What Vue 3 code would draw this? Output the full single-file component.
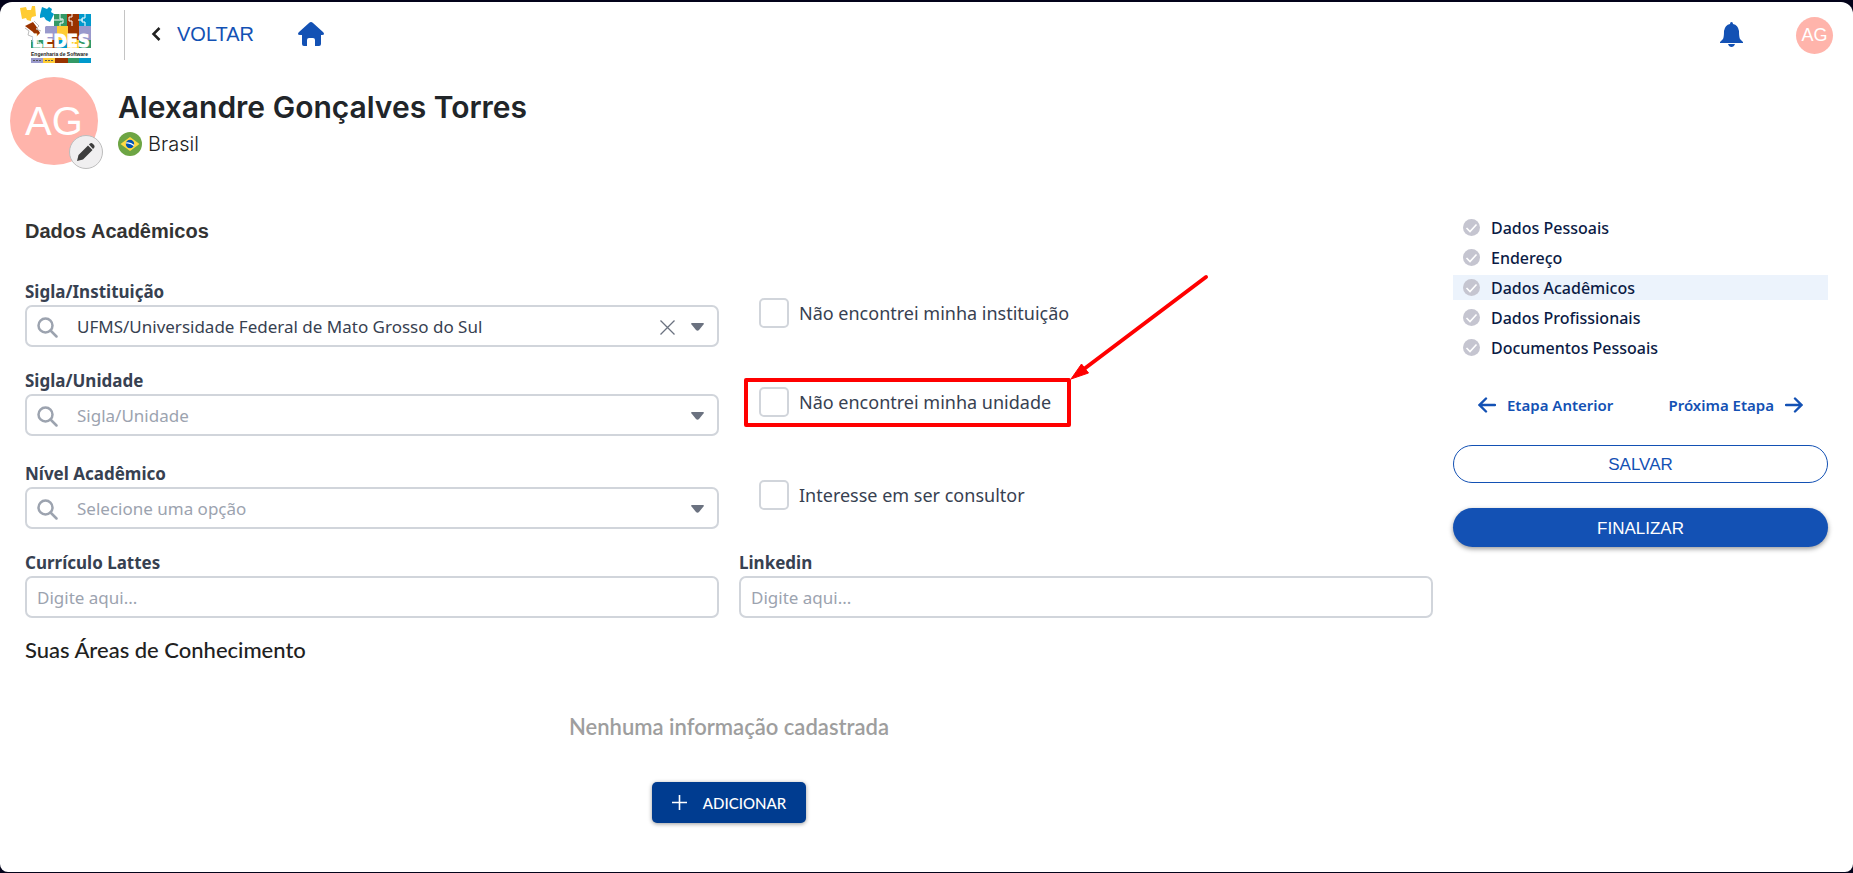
<script setup>
import { ref } from 'vue'

const steps = ['Dados Pessoais', 'Endereço', 'Dados Acadêmicos', 'Dados Profissionais', 'Documentos Pessoais']
const active = ref('Dados Acadêmicos')
const instituicao = ref('UFMS/Universidade Federal de Mato Grosso do Sul')

const fields = [
  { id: 'instituicao', label: 'Sigla/Instituição', check: 'Não encontrei minha instituição' },
  { id: 'unidade', label: 'Sigla/Unidade', placeholder: 'Sigla/Unidade', check: 'Não encontrei minha unidade', marked: true },
  { id: 'nivel', label: 'Nível Acadêmico', placeholder: 'Selecione uma opção', check: 'Interesse em ser consultor', spaced: true },
]
</script>

<template>
  <div class="frame">
    <div class="page">
      <header class="topbar">
        <svg class="logo" viewBox="0 0 72 58" role="img" aria-label="LEDES Engenharia de Software">
          <path fill="#339966" d="M34 8h13v12H34zM11 34h13v8H11z" />
          <path fill="#993300" d="M47 8h12v12H47zM24 34h13v8H24z" />
          <path fill="#0099cc" d="M59 8h12v12H59zM37 34h10v8H37z" />
          <path fill="#9999cc" d="M25 20h12v14H25zM59 20h12v14H59z" />
          <path fill="#ffcc33" d="M37 20h11v14H37zM47 34h12v8H47z" />
          <path fill="#339966" d="M59 34h12v8H59z" />
          <path fill="#993300" d="M48 20h11v14H48z" />
          <path fill="#ffcc33" d="M0 2l6-1 1 3 4 0 1-4h3l1 10-4 1-1 2 0 2-4-1-1-2-4 1z" />
          <path fill="#0099cc" d="M22 1l5 2 2-2 3 2-1 3 3 2-4 8-4-2-2-3-4 1 0-3z" />
          <path fill="#993300" d="M5 20l8-4 3 4 4 7-4 4-3-5-4-3z" />
          <g fill="none" stroke="#ffffff">
            <path d="M16 13l9 8" stroke-width="3" />
            <path d="M40 8v5h3v4h-3v3M52 8v3h-3v4h3v5M65 8v4h-3v4h3v4M34 14h8M58 14h5M18 34v3h3v5M54 34v4h-3v4" stroke-width="1" />
          </g>
          <path d="M5 22l4 3-1 4 5 2-1 5M14 15l5 5-3 3 5 2" fill="none" stroke="#bbbbbb" />
          <text class="logo-name" x="12" y="41">LEDES</text>
          <text class="logo-sub" x="11" y="50">Engenharia de Software</text>
          <path fill="#9999cc" d="M11 52h12v5H11z" />
          <path fill="#ffcc33" d="M23 52h12v5H23z" />
          <path fill="#993300" d="M35 52h13v5H35z" />
          <path fill="#339966" d="M48 52h11v5H48z" />
          <path fill="#0099cc" d="M59 52h12v5H59z" />
          <path stroke="#555555" stroke-dasharray="2 1" d="M13 54.500h8M25 54.500h8" />
        </svg>
        <span class="divider"></span>
        <a class="back" href="#voltar">
          <svg width="10" height="14" viewBox="0 0 10 14"><path d="M8.500 1L2.500 7l6 6" fill="none" stroke="#212121" stroke-width="2.500" /></svg>
          VOLTAR
        </a>
        <a class="home" href="#inicio" aria-label="Início">
          <svg width="26" height="24" viewBox="0 0 26 24"><path fill="#1351b4" d="M13 0q1 0 2 1l10 9q1 1 1 2t-2 1h-1v9q0 2-2 2h-4v-6q0-2-2-2h-4q-2 0-2 2v6H6q-2 0-2-2v-9H2q-2 0-2-1t1-2l10-9q1-1 2-1z" /></svg>
        </a>
        <button class="bell" type="button" aria-label="Notificações">
          <svg width="23" height="25" viewBox="0 0 23 25"><path fill="#1351b4" d="M11.500 0q1.500 0 1.500 2 5 1 6 7 0 6 1 8l3 3v1H0v-1l3-3q1-2 1-8 1-6 6-7 0-2 1.500-2zM8 22h7q-1 3-3.500 3T8 22z" /></svg>
        </button>
        <span class="avatar small">AG</span>
      </header>

      <section class="profile">
        <div class="photo">
          <span class="avatar large">AG</span>
          <button class="edit" type="button" aria-label="Editar foto">
            <svg width="18" height="18" viewBox="0 0 18 18"><path fill="#3d3d3d" d="M0 18l1.500-6L11 2.500 15.500 7 6 16.500zM12 1.500l1-1q1.500-1 3 .5l1 1q1.200 1.500 0 3l-1 1z" /></svg>
          </button>
        </div>
        <div>
          <h1>Alexandre Gonçalves Torres</h1>
          <p class="country">
            <svg width="24" height="24" viewBox="0 0 24 24">
              <circle cx="12" cy="12" r="12" fill="#6da544" />
              <path d="M12 5l9.500 7-9.500 7-9.500-7z" fill="#ffda44" />
              <circle cx="12" cy="12" r="4.200" fill="#0052b4" />
              <path d="M8 11q4-1 8 2.500" fill="none" stroke="#ffffff" stroke-width="1.200" />
            </svg>
            Brasil
          </p>
        </div>
      </section>

      <div class="content">
        <main>
          <h2>Dados Acadêmicos</h2>
          <div v-for="f in fields" :key="f.id" class="row" :class="{ spaced: f.spaced }">
            <div class="field">
              <label :for="f.id">{{ f.label }}</label>
              <div class="select-wrap">
                <svg class="search" width="21" height="21" viewBox="0 0 21 21"><circle cx="8.500" cy="8.500" r="7" fill="none" stroke="#9ca3af" stroke-width="2.500" /><path d="M13.500 13.500l6 6" stroke="#9ca3af" stroke-width="2.500" stroke-linecap="round" /></svg>
                <select v-if="!f.placeholder" :id="f.id" v-model="instituicao">
                  <option>UFMS/Universidade Federal de Mato Grosso do Sul</option>
                </select>
                <select v-else :id="f.id" class="empty">
                  <option value="">{{ f.placeholder }}</option>
                </select>
                <button v-if="!f.placeholder" class="clear" type="button" aria-label="Limpar" @click="instituicao = ''">
                  <svg width="15" height="15" viewBox="0 0 15 15"><path d="M.5.5l14 14M14.500.5l-14 14" stroke="#6b7280" stroke-width="1.300" /></svg>
                </button>
                <svg class="caret" width="13" height="8" viewBox="0 0 13 8"><path d="M1 0h11q1.500 0 .5 1.500L8 7q-1.500 1.500-3 0L.5 1.500Q-.5 0 1 0z" fill="#6b7280" /></svg>
              </div>
            </div>
            <div class="option">
              <label class="check"><input type="checkbox" />{{ f.check }}</label>
              <template v-if="f.marked">
                <span class="mark"></span>
                <svg class="arrow" width="140" height="108" viewBox="0 0 140 108">
                  <path d="M135 5L13 97" stroke="#ff0000" stroke-width="4" stroke-linecap="round" />
                  <path d="M0 107L10.500 92l7 9z" fill="#ff0000" stroke="#ff0000" />
                </svg>
              </template>
            </div>
          </div>
          <div class="row">
            <div class="field">
              <label for="lattes">Currículo Lattes</label>
              <input id="lattes" type="text" placeholder="Digite aqui..." />
            </div>
            <div class="field">
              <label for="linkedin">Linkedin</label>
              <input id="linkedin" type="text" placeholder="Digite aqui..." />
            </div>
          </div>
          <h3>Suas Áreas de Conhecimento</h3>
          <p class="none">Nenhuma informação cadastrada</p>
          <button class="add" type="button">
            <svg width="15" height="15" viewBox="0 0 15 15"><path d="M7.500 0v15M0 7.500h15" stroke="#ffffff" stroke-width="1.600" /></svg>
            ADICIONAR
          </button>
        </main>

        <aside>
          <nav class="steps">
            <a v-for="s in steps" :key="s" href="#etapa" :class="{ current: s === active }" @click.prevent="active = s">
              <svg width="17" height="17" viewBox="0 0 17 17"><circle cx="8.500" cy="8.500" r="8.500" fill="#c5c5d0" /><path d="M3.500 9l3.500 3.500 6.500-7" fill="none" stroke="#ffffff" stroke-width="1.600" /></svg>
              {{ s }}
            </a>
          </nav>
          <div class="pager">
            <button type="button">
              <svg width="18" height="16" viewBox="0 0 18 16"><path d="M17 8H2M8 1.500L1.500 8 8 14.500" fill="none" stroke="#1351b4" stroke-width="2.400" stroke-linecap="round" /></svg>
              Etapa Anterior
            </button>
            <button type="button">
              Próxima Etapa
              <svg width="18" height="16" viewBox="0 0 18 16"><path d="M1 8h15M10 1.500L16.500 8 10 14.500" fill="none" stroke="#1351b4" stroke-width="2.400" stroke-linecap="round" /></svg>
            </button>
          </div>
          <button class="pill outline" type="button">SALVAR</button>
          <button class="pill solid" type="button">FINALIZAR</button>
        </aside>
      </div>
    </div>
  </div>
</template>

<style>
body {
  margin: 0;
  background: #03031a;
}
</style>

<style scoped>
* {
  box-sizing: border-box;
}
.frame {
  min-height: 100vh;
  display: flex;
  padding: 2px 0 1px;
  background: #03031a;
  font-family: "Noto Sans", sans-serif;
  font-size: 17px;
}
.page {
  flex: 1;
  min-width: 0;
  background: #ffffff;
  border-radius: 12px 12px 8px 8px;
}
svg {
  display: block;
  flex: none;
}
button {
  font: inherit;
  border: 0;
  padding: 0;
  background: none;
  cursor: pointer;
}
a {
  text-decoration: none;
}
h1, h2, h3, p {
  margin: 0;
}
.topbar {
  height: 66px;
  display: flex;
  align-items: center;
  padding: 0 20px;
}
.logo {
  width: 72px;
  height: 58px;
  overflow: visible;
}
.logo-name {
  font: bold 18px "DejaVu Sans Condensed", "DejaVu Sans", sans-serif;
  fill: #ffffff;
  stroke: #ffffff;
}
.logo-sub {
  font: bold 5px "Liberation Sans", sans-serif;
  fill: #222222;
}
.divider {
  width: 1px;
  height: 50px;
  margin: 0 26px 0 32px;
  background: #c4c4c4;
}
.back,
.home,
.bell {
  margin-bottom: 2px;
}
.back {
  display: flex;
  align-items: center;
  gap: 16px;
  color: #1351b4;
  font: 20px/24px "Liberation Sans", sans-serif;
}
.home {
  margin-left: 44px;
}
.bell {
  margin-left: auto;
}
.avatar {
  display: flex;
  align-items: center;
  justify-content: center;
  border-radius: 50%;
  background: #ffb4ab;
  color: #ffffff;
  font-family: "Liberation Sans", sans-serif;
}
.small {
  width: 37px;
  height: 37px;
  margin-left: 53px;
  font-size: 18px;
}
.large {
  width: 88px;
  height: 88px;
  font-size: 40px;
}
.profile {
  display: flex;
  gap: 20px;
  padding: 9px 10px 0;
}
.photo {
  position: relative;
}
.edit {
  position: absolute;
  right: -5px;
  bottom: -4px;
  width: 34px;
  height: 34px;
  display: flex;
  align-items: center;
  justify-content: center;
  border: 1px solid #bdbdbd;
  border-radius: 50%;
  background: #f0eff0;
}
h1 {
  padding-top: 10px;
  font: 600 30px/40px Inter, sans-serif;
  color: #212529;
}
.country {
  display: flex;
  align-items: center;
  gap: 6px;
  padding-top: 5px;
  font: 300 20px/24px Inter, sans-serif;
  color: #212121;
}
.content {
  display: grid;
  grid-template-columns: minmax(0, 1fr) 375px;
  gap: 20px;
  padding: 50px 25px 40px;
}
main {
  display: flex;
  flex-direction: column;
}
h2 {
  margin-bottom: 11px;
  font: bold 20px/32px "Liberation Sans", sans-serif;
  color: #333333;
}
.row {
  display: grid;
  grid-template-columns: 1fr 1fr;
  gap: 20px;
  margin-top: 21px;
}
.row.spaced {
  margin-top: 25px;
}
.field {
  display: flex;
  flex-direction: column;
}
.field label {
  font-size: 17px;
  font-weight: 700;
  line-height: 26px;
  color: #374151;
}
.select-wrap {
  position: relative;
}
select,
input[type="text"] {
  width: 100%;
  height: 42px;
  border: 2px solid #d1d5db;
  border-radius: 7px;
  background: #ffffff;
  color: #374151;
  font: 17px/24px "Noto Sans", sans-serif;
}
select {
  appearance: none;
  padding: 2px 80px 0 50px;
}
.empty {
  color: #9ca3af;
}
input[type="text"] {
  padding: 0 10px;
}
input::placeholder {
  color: #9ca3af;
  opacity: 1;
}
.search {
  position: absolute;
  left: 12px;
  top: 12px;
}
.clear {
  position: absolute;
  right: 44px;
  top: 15px;
}
.caret {
  position: absolute;
  right: 15px;
  top: 18px;
}
.option {
  position: relative;
  padding: 19px 0 0 20px;
}
.check {
  display: inline-flex;
  align-items: center;
  gap: 10px;
  color: #374151;
  font-size: 18px;
  line-height: 30px;
}
.check input {
  appearance: none;
  width: 30px;
  height: 30px;
  margin: 0;
  border: 2px solid #d1d5db;
  border-radius: 5px;
}
.mark {
  position: absolute;
  left: 5px;
  top: 10px;
  width: 327px;
  height: 49px;
  border: 4px solid #ff0000;
  border-radius: 2px;
  pointer-events: none;
}
.arrow {
  position: absolute;
  left: 332px;
  top: -96px;
}
h3 {
  margin-top: 20px;
  font: 500 22px/24px Lato, sans-serif;
  color: #212121;
}
.none {
  margin-top: 53px;
  text-align: center;
  font: 600 22px/24px Lato, sans-serif;
  color: #9e9e9e;
}
.add {
  align-self: center;
  display: flex;
  align-items: center;
  gap: 16px;
  height: 41px;
  margin-top: 43px;
  padding: 0 20px;
  border-radius: 5px;
  background: #003c90;
  box-shadow: 0 1px 4px rgba(0, 0, 0, 0.4);
  color: #ffffff;
  font: 500 15px/24px Lato, sans-serif;
}
.steps {
  display: flex;
  flex-direction: column;
  gap: 5px;
}
.steps a {
  display: flex;
  align-items: center;
  gap: 11px;
  height: 25px;
  padding: 0 10px;
  color: #0b1b45;
  font-size: 16px;
  font-weight: 500;
}
.steps .current {
  background: #ecf3fc;
}
.pager {
  display: flex;
  justify-content: space-between;
  padding: 33px 25px 28px;
}
.pager button {
  display: flex;
  align-items: center;
  gap: 11px;
  color: #1351b4;
  font-size: 15px;
  font-weight: 600;
  line-height: 24px;
}
.pill {
  width: 100%;
  height: 38px;
  padding-top: 2px;
  border-radius: 20px;
  font: 17px/24px "Liberation Sans", sans-serif;
}
.outline {
  border: 1px solid #1351b4;
  color: #1351b4;
}
.solid {
  height: 39px;
  margin-top: 25px;
  background: #1351b4;
  box-shadow: 0 2px 5px rgba(0, 0, 0, 0.4);
  color: #ffffff;
}
</style>
